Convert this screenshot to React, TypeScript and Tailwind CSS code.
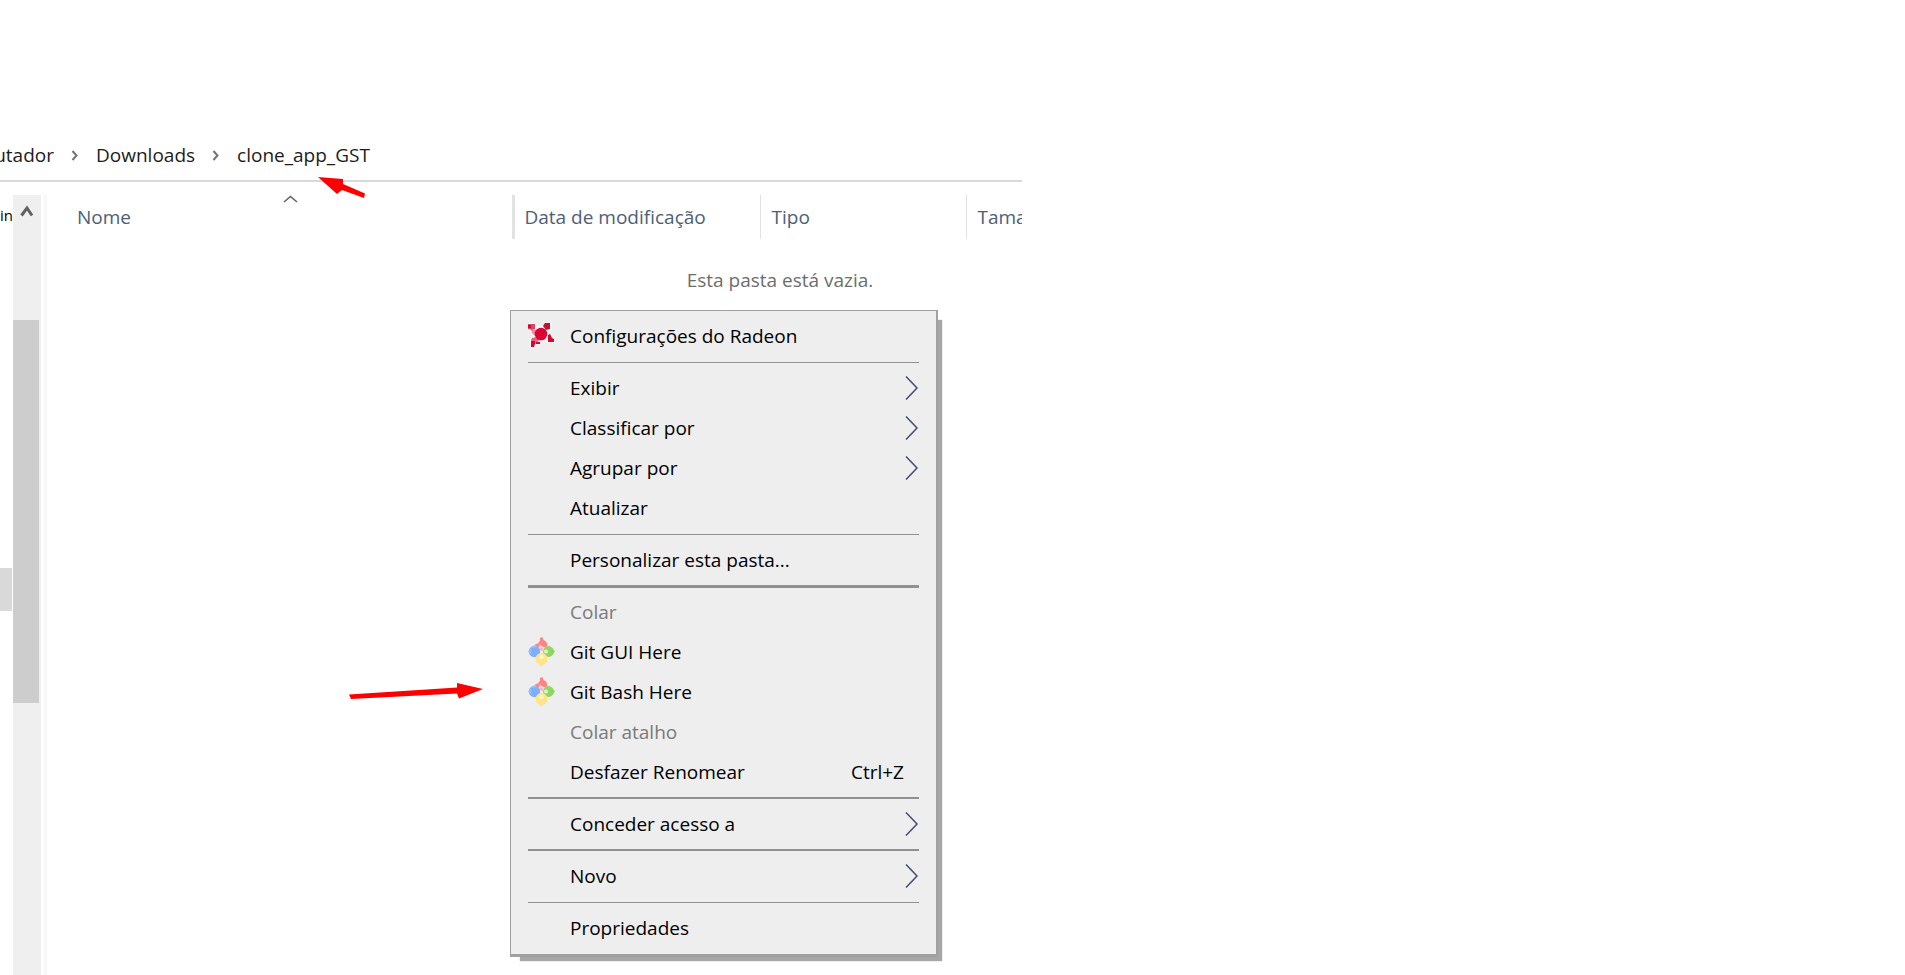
import type { ReactNode } from "react";

function RadeonIcon() {
  return (
    <svg width="28" height="26" viewBox="0 0 28 26" aria-hidden="true">
      <path d="M0 0h7l4 3h4l3-3h6v7l-3 4v2l6 2v5h-8l-3-1h-4l-1 3-4 3H2v-9l3-4-4-4z" fill="#f7f7f7" />
      <path d="M0 1h7v5l-3 1-4-1z" fill="#dd4563" />
      <path d="M0 2h3v3H0zM15 3l2-3h5v6l-4 1z" fill="#c8102e" />
      <path d="M3 7h5l2 3-3 3-3-3z" fill="#f38ba0" />
      <path d="M4 15l4-1 3 3-3 4H3v-4z" fill="#ea5f7c" />
      <path d="M3 18h4v3l-1 3H3zM8 19h4v2H8zM20 12l2-1 2 4 2 1v3h-6v-3z" fill="#cf0a30" />
      <circle cx="13" cy="11" r="6.300" fill="#dc0531" />
    </svg>
  );
}

function GitIcon() {
  return (
    <svg width="28" height="30" viewBox="0 0 28 30" aria-hidden="true">
      <circle cx="6.500" cy="14.500" r="5.700" fill="#7fb0fd" />
      <path d="M0 14.500l3-3v6zM3 11l5-4 2 3z" fill="#9ac1fd" />
      <path d="M12 0.500h3v2l3 2 2 4-2 2-4-1-4-3 2-3z" fill="#ff8585" />
      <path d="M7 8l3-2 2 3-2 2z" fill="#ff8585" />
      <path d="M12 10l3 1v3l-3-1z" fill="#ffb3b3" />
      <path d="M19 7l3 4-3 1z" fill="#c2e8ae" />
      <circle cx="20.500" cy="14.500" r="5.400" fill="#8fd662" />
      <path d="M24 11l3 3.500-3 3.500z" fill="#8fd662" />
      <circle cx="18" cy="14.500" r="2" fill="#dff2d5" />
      <circle cx="13.500" cy="22" r="6" fill="#ffe583" />
      <path d="M10 26l3.500 3.500L17 26z" fill="#ffe583" />
      <circle cx="13.500" cy="20" r="2.200" fill="#fff5cc" />
    </svg>
  );
}

function Submenu() {
  return (
    <svg className="ml-auto" width="14" height="26" viewBox="0 0 14 26" fill="none" aria-hidden="true">
      <path d="M1 1.500L12 13L1 24.500" stroke="#464a72" strokeWidth="1.500" />
    </svg>
  );
}

function Crumb() {
  return (
    <svg width="8" height="11" viewBox="0 0 8 11" fill="none" aria-hidden="true">
      <path d="M1.500 1l4 4.500-4 4.500" stroke="#747474" strokeWidth="2" />
    </svg>
  );
}

type Entry = {
  label: string;
  icon?: ReactNode;
  disabled?: boolean;
  submenu?: boolean;
  shortcut?: string;
};

const groups: { rule: string; items: Entry[] }[] = [
  { rule: "", items: [{ label: "Configurações do Radeon", icon: <RadeonIcon /> }] },
  {
    rule: "h-px",
    items: [
      { label: "Exibir", submenu: true },
      { label: "Classificar por", submenu: true },
      { label: "Agrupar por", submenu: true },
      { label: "Atualizar" },
    ],
  },
  { rule: "h-px", items: [{ label: "Personalizar esta pasta..." }] },
  {
    rule: "h-[3px]",
    items: [
      { label: "Colar", disabled: true },
      { label: "Git GUI Here", icon: <GitIcon /> },
      { label: "Git Bash Here", icon: <GitIcon /> },
      { label: "Colar atalho", disabled: true },
      { label: "Desfazer Renomear", shortcut: "Ctrl+Z" },
    ],
  },
  { rule: "h-[2px]", items: [{ label: "Conceder acesso a", submenu: true }] },
  { rule: "h-[2px]", items: [{ label: "Novo", submenu: true }] },
  { rule: "h-px", items: [{ label: "Propriedades" }] },
];

function ContextMenu() {
  return (
    <div
      role="menu"
      className="absolute top-[310px] left-[510px] w-[428px] border border-r-2 border-b-[3px] border-[#a0a0a0] bg-[#eeeeee] px-[17px] pt-[5px] pb-[6px] text-black shadow-[7px_7px_1px_-3px_#a6a6a6]"
    >
      {groups.map((group, g) => (
        <div key={g}>
          {group.rule && (
            <div className="flex h-3 items-center" role="separator">
              <div className={`w-full bg-[#919191] ${group.rule}`} />
            </div>
          )}
          {group.items.map((item) => (
            <button
              key={item.label}
              role="menuitem"
              disabled={item.disabled}
              className="flex h-10 w-full items-center text-left disabled:text-[#7a7a7a]"
            >
              <span className="w-[42px] shrink-0">{item.icon}</span>
              <span className="whitespace-nowrap">{item.label}</span>
              {item.shortcut && <span className="mr-[15px] ml-auto">{item.shortcut}</span>}
              {item.submenu && <Submenu />}
            </button>
          ))}
        </div>
      ))}
    </div>
  );
}

export default function App() {
  return (
    <div className="relative flex min-h-screen flex-col overflow-hidden bg-white font-['Open_Sans','Noto_Sans',sans-serif] text-[19px] leading-6 text-[#1c1c1c]">
      <div className="flex max-w-[1022px] grow flex-col">
        <nav aria-label="Caminho" className="flex h-[182px] items-end border-b-2 border-[#d9d9d9] pb-[13px]">
          <div className="flex items-center gap-[17px]">
            <div className="flex w-[54px] justify-end overflow-hidden">
              <a href="#computador">utador</a>
            </div>
            <Crumb />
            <a href="#downloads">Downloads</a>
            <Crumb />
            <a href="#clone">clone_app_GST</a>
          </div>
        </nav>

        <div className="flex grow pt-[13px]">
          <aside className="flex w-[13px] shrink-0 flex-col">
            <span className="mt-2 text-[15px] text-black">in</span>
            <span className="mt-[341px] mr-px h-[43px] bg-[#d9d9d9]" />
          </aside>
          <div className="flex w-7 shrink-0 flex-col bg-[#efefef]">
            <div className="flex h-[125px] justify-center pt-[9px]">
              <svg width="14" height="14" viewBox="0 0 14 14" fill="none" aria-hidden="true">
                <path d="M1.500 11.500L7 4l5 7.500" stroke="#606060" strokeWidth="3" />
              </svg>
            </div>
            <div className="mr-[2px] h-[383px] bg-[#cdcdcd]" />
          </div>
          <div className="ml-[3px] w-[3px] shrink-0 bg-[#f7f7f7]" />

          <main className="min-w-0 grow">
            <table className="w-full table-fixed border-collapse">
              <colgroup>
                <col />
                <col className="w-[247px]" />
                <col className="w-[206px]" />
                <col className="w-[56px]" />
              </colgroup>
              <thead>
                <tr className="h-11 text-left text-[#4c607a]">
                  <th className="relative p-0 pl-[30px] font-normal">
                    Nome
                    <svg className="absolute top-0 left-[236px]" width="15" height="8" viewBox="0 0 15 8" fill="none" aria-hidden="true">
                      <path d="M1 7l6.500-5.500L14 7" stroke="#606060" strokeWidth="1.500" />
                    </svg>
                  </th>
                  <th className="border-l-[3px] border-[#e2e2e2] p-0 pl-[10px] font-normal">Data de modificação</th>
                  <th className="border-l border-[#e2e2e2] p-0 pl-[11px] font-normal">Tipo</th>
                  <th className="overflow-hidden border-l border-[#e2e2e2] p-0 pl-[11px] font-normal">Tama</th>
                </tr>
              </thead>
              <tbody>
                <tr>
                  <td colSpan={4} className="p-0 pt-[29px] pl-[598px] text-center text-[#6d6d6d]">
                    <div className="w-[270px]">Esta pasta está vazia.</div>
                  </td>
                </tr>
              </tbody>
            </table>
          </main>
        </div>
      </div>

      <ContextMenu />

      <svg className="absolute top-[175px] left-[317px]" width="54" height="28" viewBox="0 0 54 28" aria-hidden="true">
        <path d="M1 2L26 4L26 9L48 18.500L47 23L25 15L20 19Z" fill="#ff0000" />
      </svg>
      <svg className="absolute top-[680px] left-[346px]" width="140" height="22" viewBox="0 0 140 22" aria-hidden="true">
        <path d="M3 14.500L111 7.500V3L137 9L113 18.500L111 13.500L5 19Z" fill="#ff0000" />
      </svg>
    </div>
  );
}
